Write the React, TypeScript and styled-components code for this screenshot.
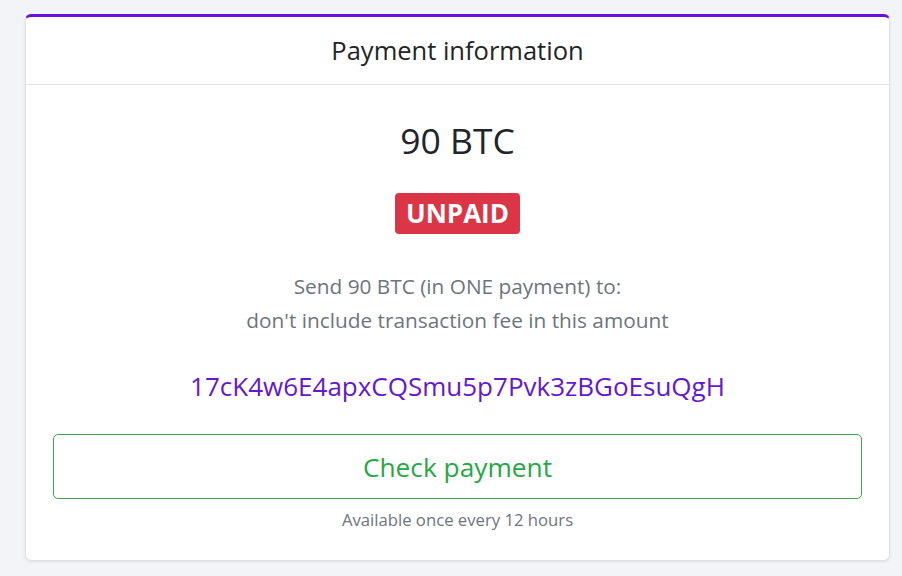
import React from "react";
import styled, { createGlobalStyle } from "styled-components";

const Global = createGlobalStyle`
  html, body { margin: 0; padding: 0; background: #f3f4f8; }
  body { font-family: "Open Sans", "Noto Sans", sans-serif; color: #212529; }
  * { box-sizing: border-box; }
`;

const Page = styled.div`
  padding: 14px 12px 15px 25px;
`;

const Card = styled.div`
  background: #fff;
  border: 1px solid #dfe1e6;
  border-top: 3px solid #6610e2;
  border-radius: 6px;
  box-shadow: 0 1px 3px rgba(0, 0, 0, 0.08);
  display: flex;
  flex-direction: column;
`;

const Header = styled.div`
  height: 68px;
  border-bottom: 1px solid #e2e4e8;
  display: flex;
  align-items: center;
  justify-content: center;
  font-size: 25.5px;
  color: #212529;
  padding-bottom: 2px;
`;

const Body = styled.div`
  padding: 27px 27px 28px;
  display: flex;
  flex-direction: column;
  align-items: center;
`;

const Amount = styled.div`
  font-size: 35.5px;
  line-height: 56px;
  color: #212529;
`;

const Badge = styled.span`
  margin-top: 25px;
  background: #dc3545;
  color: #fff;
  font-weight: 700;
  font-size: 26px;
  line-height: 41px;
  padding: 0 11px;
  border-radius: 4px;
`;

const Info = styled.div`
  margin-top: 35px;
  text-align: center;
  color: #6c757d;
  font-size: 20.8px;
  line-height: 34px;
`;

const Address = styled.div`
  margin-top: 32px;
  color: #6418d0;
  font-size: 26px;
  line-height: 34px;
`;

const CheckButton = styled.button`
  margin-top: 31px;
  width: 100%;
  height: 65px;
  background: #fff;
  border: 1px solid #3ea64f;
  border-radius: 5px;
  color: #28a745;
  font-family: inherit;
  font-size: 26.3px;
  cursor: pointer;
`;

const Note = styled.div`
  margin-top: 9px;
  font-size: 16.7px;
  line-height: 24px;
  color: #6c757d;
`;

export default function App() {
  return (
    <>
      <Global />
      <Page>
        <Card>
          <Header>Payment information</Header>
          <Body>
            <Amount>90 BTC</Amount>
            <Badge>UNPAID</Badge>
            <Info>
              Send 90 BTC (in ONE payment) to:
              <br />
              don't include transaction fee in this amount
            </Info>
            <Address>17cK4w6E4apxCQSmu5p7Pvk3zBGoEsuQgH</Address>
            <CheckButton>Check payment</CheckButton>
            <Note>Available once every 12 hours</Note>
          </Body>
        </Card>
      </Page>
    </>
  );
}
